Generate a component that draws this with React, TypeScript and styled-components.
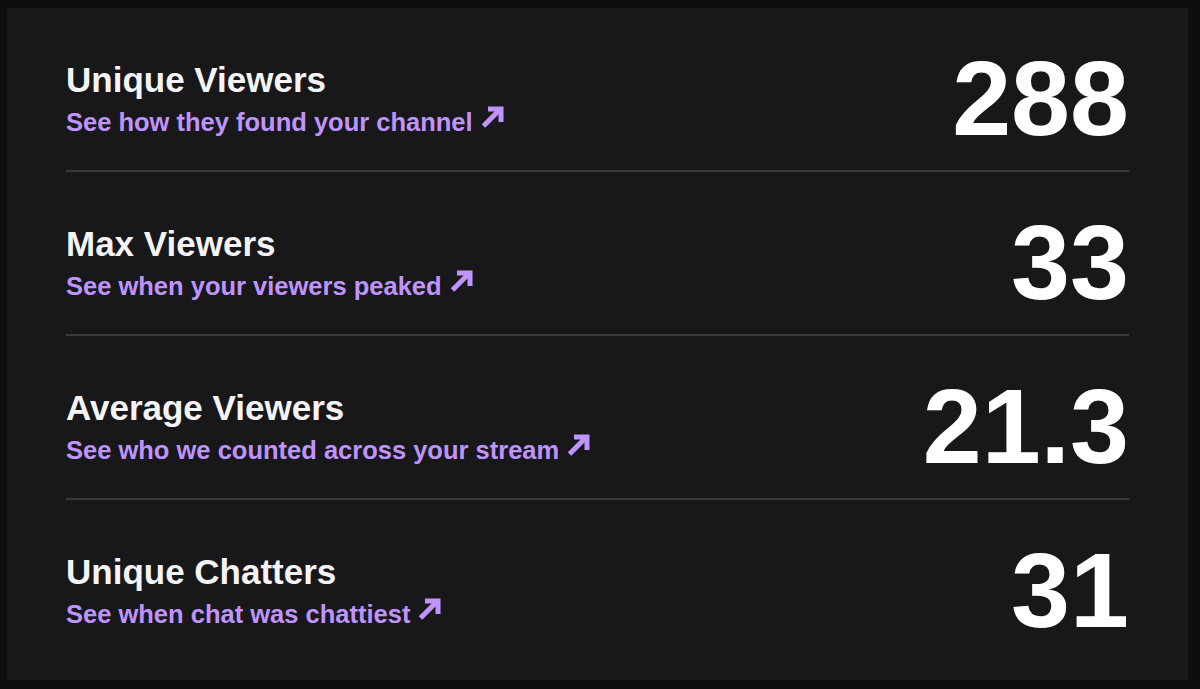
import styled, { createGlobalStyle } from "styled-components";

interface Stat {
  title: string;
  link: string;
  value: string;
}

const stats: Stat[] = [
  { title: "Unique Viewers", link: "See how they found your channel", value: "288" },
  { title: "Max Viewers", link: "See when your viewers peaked", value: "33" },
  { title: "Average Viewers", link: "See who we counted across your stream", value: "21.3" },
  { title: "Unique Chatters", link: "See when chat was chattiest", value: "31" },
];

function ArrowIcon() {
  return (
    <S.Arrow viewBox="0 0 23 22" fill="none">
      <path d="M2.5 20 L18 4.5" stroke="currentColor" strokeWidth="5" strokeLinecap="butt" />
      <path d="M7 3 H20 V16" stroke="currentColor" strokeWidth="5" strokeLinejoin="miter" strokeLinecap="butt" />
    </S.Arrow>
  );
}

export default function App() {
  return (
    <>
      <GlobalStyle />
      <S.Panel>
        {stats.map((stat) => (
          <S.Row key={stat.title}>
            <S.Info>
              <S.Title>{stat.title}</S.Title>
              <S.Link href="#">
                {stat.link}
                <ArrowIcon />
              </S.Link>
            </S.Info>
            <S.Value>{stat.value}</S.Value>
          </S.Row>
        ))}
      </S.Panel>
    </>
  );
}

const GlobalStyle = createGlobalStyle`
  html, body {
    margin: 0;
    padding: 0;
    background: #0e0e10;
  }

  body {
    font-family: "Liberation Sans", Arial, sans-serif;
    -webkit-font-smoothing: antialiased;
  }
`;

const S = {
  Panel: styled.div`
    width: 1181px;
    height: 672px;
    margin: 8px 0 0 7px;
    padding: 0 59px 18px;

    box-sizing: border-box;
    background: #18181b;
  `,
  Row: styled.div`
    display: flex;
    align-items: center;
    justify-content: space-between;

    padding: 38px 0 19px;

    border-bottom: 2px solid #3a3a3d;

    &:last-child {
      border-bottom: none;
    }
  `,
  Info: styled.div`
    display: flex;
    flex-direction: column;
  `,
  Title: styled.div`
    font-size: 35px;
    font-weight: 700;
    line-height: 40px;
    color: #f4f4f6;
  `,
  Link: styled.a`
    display: inline-flex;
    align-items: flex-start;
    gap: 8px;

    margin-top: 8px;

    font-size: 25.5px;
    font-weight: 700;
    line-height: 29px;
    color: #bf94ff;
    text-decoration: none;
  `,
  Arrow: styled.svg`
    flex-shrink: 0;
    width: 23px;
    height: 22px;
    margin-top: -2px;
  `,
  Value: styled.div`
    font-size: 106px;
    font-weight: 700;
    line-height: 105px;
    color: #ffffff;
  `,
};
